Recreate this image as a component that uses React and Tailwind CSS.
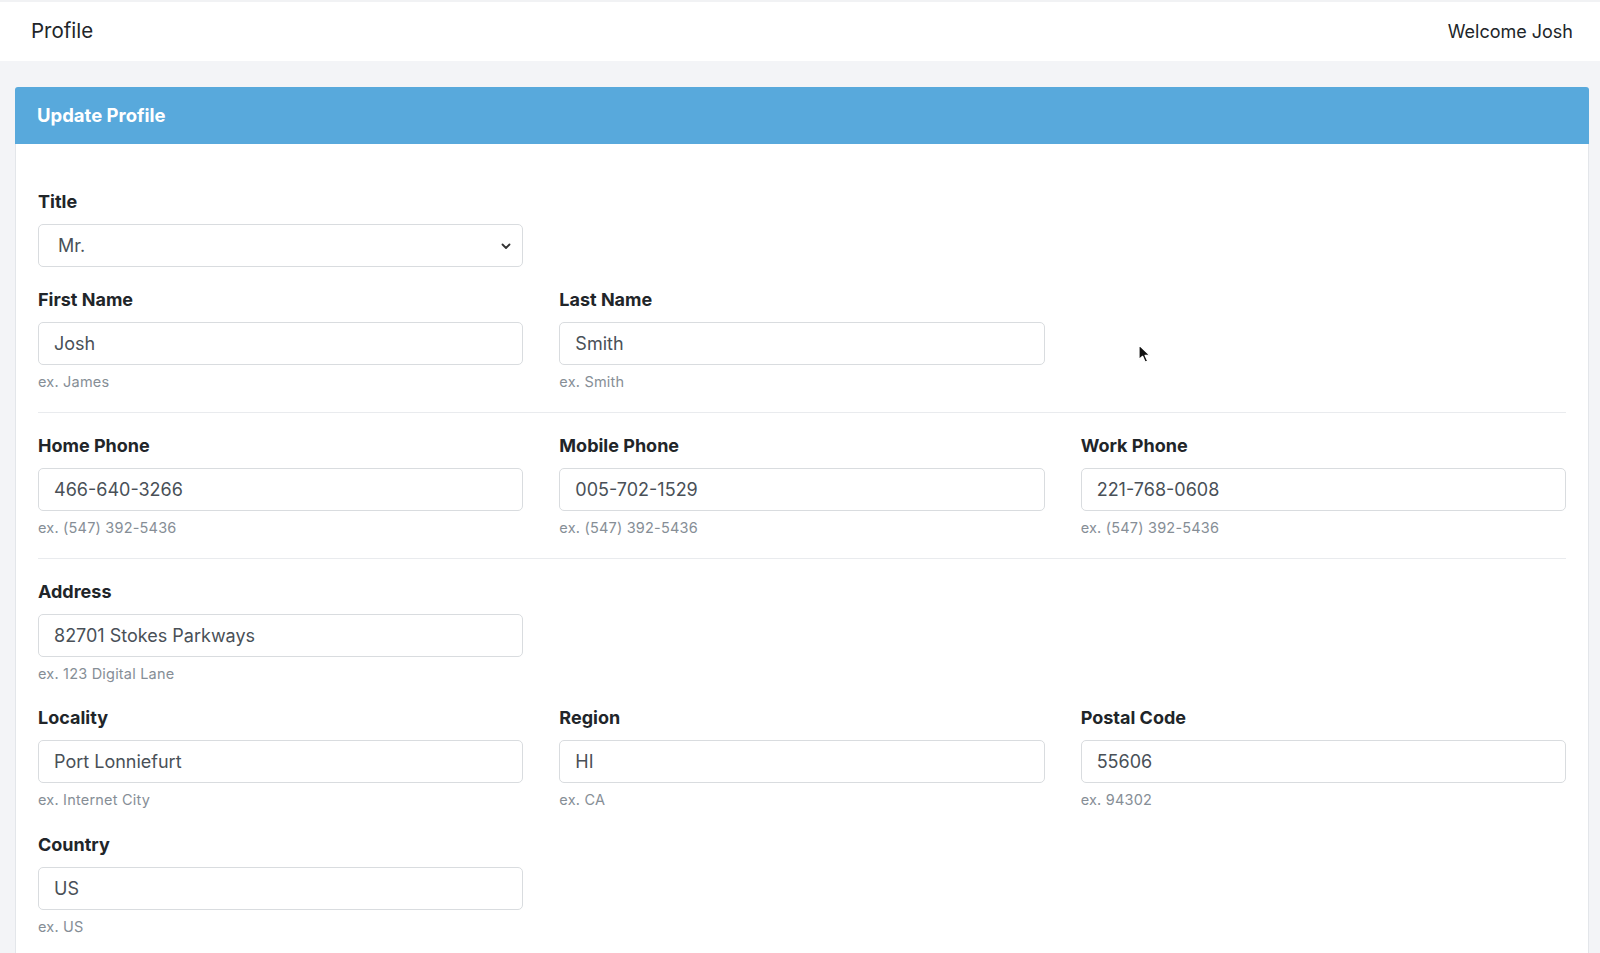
import React from "react";

const font = { fontFamily: "Inter, 'Liberation Sans', Arial, sans-serif" };

function Label({ children }) {
  return (
    <div className="text-[18px] leading-[27px] font-bold text-[#212529] mb-[9px]">
      {children}
    </div>
  );
}

function Field({ label, value, help }) {
  return (
    <div className="flex flex-col">
      <Label>{label}</Label>
      <div className="h-[43px] border border-[#d9dcdf] rounded-[5px] bg-white flex items-center pl-[15px] text-[18px] text-[#495057]">
        {value}
      </div>
      {help && (
        <div className="mt-[6px] text-[14.5px] leading-[22px] text-[#868e96] tracking-[0.2px]">
          {help}
        </div>
      )}
    </div>
  );
}

function Divider() {
  return <div className="h-px bg-[#e9ebee] my-[19px]" />;
}

export default function App() {
  return (
    <div className="min-h-[953px] bg-[#f3f4f7]" style={font}>
      <div className="h-[61px] bg-white border-t-2 border-[#f1f2f4] flex items-center justify-between pl-[31px] pr-[27px]">
        <div className="text-[20.5px] text-[#212529]">Profile</div>
        <div className="text-[18px] text-[#212529]">Welcome Josh</div>
      </div>
      <div className="pl-[15px] pr-[11px] pt-[26px]">
        <div className="bg-white rounded-t-[4px] border border-[#e3e6ea] min-h-[870px] relative">
          <div className="h-[57px] bg-[#58a9dc] rounded-t-[3px] flex items-center pl-[22px] -mx-px -mt-px">
            <div className="text-[18.5px] font-bold text-white">Update Profile</div>
          </div>
          <div className="px-[22px] pt-[44px]">
            <div className="grid grid-cols-3 gap-x-[36px]">
              <div className="flex flex-col">
                <Label>Title</Label>
                <div className="h-[43px] border border-[#d9dcdf] rounded-[5px] bg-white flex items-center justify-between pl-[19px] pr-[10px] text-[18px] text-[#495057]">
                  <span>Mr.</span>
                  <svg width="12" height="12" viewBox="0 0 12 12" fill="none">
                    <path d="M2.5 4.5 L6 8 L9.5 4.5" stroke="#333" strokeWidth="1.8" strokeLinecap="round" strokeLinejoin="round" />
                  </svg>
                </div>
              </div>
            </div>
            <div className="grid grid-cols-3 gap-x-[36px] mt-[19px]">
              <Field label="First Name" value="Josh" help="ex. James" />
              <Field label="Last Name" value="Smith" help="ex. Smith" />
            </div>
            <Divider />
            <div className="grid grid-cols-3 gap-x-[36px]">
              <Field label="Home Phone" value="466-640-3266" help="ex. (547) 392-5436" />
              <Field label="Mobile Phone" value="005-702-1529" help="ex. (547) 392-5436" />
              <Field label="Work Phone" value="221-768-0608" help="ex. (547) 392-5436" />
            </div>
            <Divider />
            <div className="grid grid-cols-3 gap-x-[36px]">
              <Field label="Address" value="82701 Stokes Parkways" help="ex. 123 Digital Lane" />
            </div>
            <div className="grid grid-cols-3 gap-x-[36px] mt-[19px]">
              <Field label="Locality" value="Port Lonniefurt" help="ex. Internet City" />
              <Field label="Region" value="HI" help="ex. CA" />
              <Field label="Postal Code" value="55606" help="ex. 94302" />
            </div>
            <div className="grid grid-cols-3 gap-x-[36px] mt-[20px]">
              <Field label="Country" value="US" help="ex. US" />
            </div>
          </div>
          <svg
            className="absolute left-[1122px] top-[256px]"
            width="14"
            height="20"
            viewBox="0 0 14 20"
          >
            <path d="M1 1 L1 15.5 L4.6 12.3 L7.2 18.2 L9.6 17.1 L7.1 11.4 L11.8 11.2 Z" fill="#111" stroke="#fff" strokeWidth="1.2" strokeLinejoin="round" />
          </svg>
        </div>
      </div>
    </div>
  );
}
